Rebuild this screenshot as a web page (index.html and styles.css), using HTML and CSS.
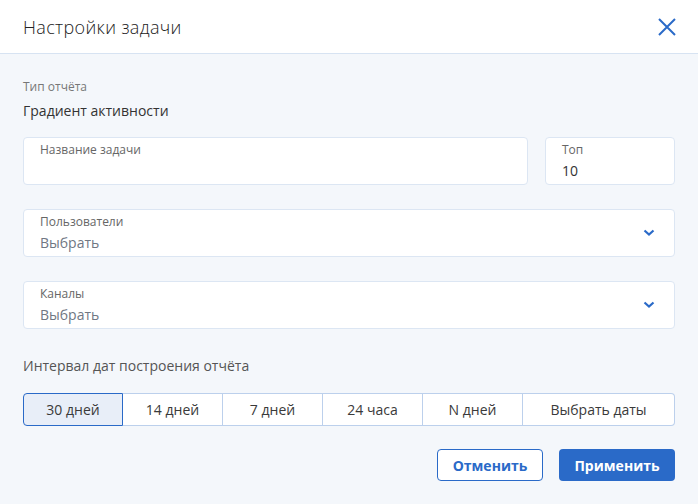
FILE: index.html
```html
<!DOCTYPE html>
<html lang="ru">
<head>
    <meta charset="UTF-8">
    <title>Настройки задачи</title>
    <link rel="stylesheet" href="styles.css">
</head>
<body>
    <div class="modal">
        <div class="modal-header">
            <h2>Настройки задачи</h2>
            <button class="close-btn" type="button">
                <svg width="20" height="20" viewBox="0 0 20 20">
                    <path d="M2 2L18 18M18 2L2 18" stroke="#2a6ac8" stroke-width="2" fill="none"/>
                </svg>
            </button>
        </div>

        <div class="modal-body">
            <div class="report-type">
                <span class="caption">Тип отчёта</span>
                <span class="value">Градиент активности</span>
            </div>

            <div class="row">
                <div class="field field-grow">
                    <label>Название задачи</label>
                    <input type="text">
                </div>
                <div class="field field-top">
                    <label>Топ</label>
                    <input type="text" value="10">
                </div>
            </div>

            <div class="field select">
                <label>Пользователи</label>
                <span class="placeholder">Выбрать</span>
                <svg class="chevron" width="12" height="8" viewBox="0 0 12 8">
                    <path d="M1.5 1.5L6 5.5L10.5 1.5" stroke="#2a6ac8" stroke-width="2.2" fill="none"/>
                </svg>
            </div>

            <div class="field select">
                <label>Каналы</label>
                <span class="placeholder">Выбрать</span>
                <svg class="chevron" width="12" height="8" viewBox="0 0 12 8">
                    <path d="M1.5 1.5L6 5.5L10.5 1.5" stroke="#2a6ac8" stroke-width="2.2" fill="none"/>
                </svg>
            </div>

            <div class="interval-title">Интервал дат построения отчёта</div>
            <div class="segments">
                <button class="segment active" type="button">30 дней</button>
                <button class="segment" type="button">14 дней</button>
                <button class="segment" type="button">7 дней</button>
                <button class="segment" type="button">24 часа</button>
                <button class="segment" type="button">N дней</button>
                <button class="segment segment-wide" type="button">Выбрать даты</button>
            </div>

            <div class="actions">
                <button class="btn btn-outline" type="button">Отменить</button>
                <button class="btn btn-primary" type="button">Применить</button>
            </div>
        </div>
    </div>
</body>
</html>
```

FILE: styles.css
```css
* {
    margin: 0;
    padding: 0;
    box-sizing: border-box;
}

body {
    font-family: 'Open Sans', 'Noto Sans', sans-serif;
    background: #f4f7fb;
    color: #333;
    width: 698px;
    height: 504px;
    overflow: hidden;
}

.modal {
    width: 698px;
    height: 504px;
    background: #f4f7fb;
}

.modal-header {
    height: 54px;
    background: white;
    border-bottom: 1px solid #d7e3f2;
    display: flex;
    align-items: center;
    justify-content: space-between;
    padding: 0 21px 0 23px;
}

.modal-header h2 {
    font-size: 18px;
    font-weight: 300;
    letter-spacing: 0.35px;
    color: #222;
    padding-top: 1px;
}

.close-btn {
    background: none;
    border: none;
    width: 20px;
    height: 20px;
    display: flex;
    cursor: pointer;
}

.modal-body {
    padding: 24px 23px 0 23px;
}

.report-type {
    display: flex;
    flex-direction: column;
}

.caption {
    font-size: 12px;
    color: #777;
    line-height: 17px;
}

.value {
    font-size: 14px;
    color: #333;
    line-height: 20px;
    margin-top: 6px;
}

.row {
    display: flex;
    gap: 17px;
    margin-top: 16px;
}

.field {
    background: white;
    border: 1px solid #dce6f3;
    border-radius: 4px;
    height: 48px;
    padding: 3px 16px 0 16px;
    display: flex;
    flex-direction: column;
    position: relative;
}

.field-grow {
    flex: 1;
}

.field-top {
    width: 130px;
}

.field label {
    font-size: 12px;
    color: #666;
    line-height: 17px;
}

.field input {
    border: none;
    outline: none;
    font-family: inherit;
    font-size: 14px;
    color: #333;
    line-height: 20px;
    height: 20px;
    margin-top: 3px;
    background: transparent;
    width: 100%;
}

.select {
    margin-top: 24px;
}

.placeholder {
    font-size: 14px;
    color: #707783;
    line-height: 20px;
    margin-top: 3px;
}

.chevron {
    position: absolute;
    right: 19px;
    top: 19px;
}

.interval-title {
    font-size: 14px;
    color: #555;
    margin-top: 27px;
    line-height: 20px;
}

.segments {
    display: flex;
    margin-top: 17px;
    height: 33px;
}

.segment {
    width: 100px;
    background: white;
    border: 1px solid #bcd0ec;
    border-left: none;
    font-family: inherit;
    font-size: 14px;
    color: #3a3a3a;
    cursor: pointer;
}

.segment.active {
    width: 100px;
    background: #e8eef8;
    border: 1px solid #2a6ac8;
    border-radius: 4px 0 0 4px;
}

.segment-wide {
    flex: 1;
    border-radius: 0 4px 4px 0;
}

.actions {
    display: flex;
    justify-content: flex-end;
    gap: 16px;
    margin-top: 23px;
}

.btn {
    height: 32px;
    border-radius: 4px;
    font-family: inherit;
    font-size: 14px;
    font-weight: 700;
    cursor: pointer;
}

.btn-outline {
    width: 106px;
    background: white;
    color: #2a6ac8;
    border: 1px solid #2a6ac8;
}

.btn-primary {
    width: 116px;
    background: #2a6ac8;
    color: white;
    border: none;
}
```
